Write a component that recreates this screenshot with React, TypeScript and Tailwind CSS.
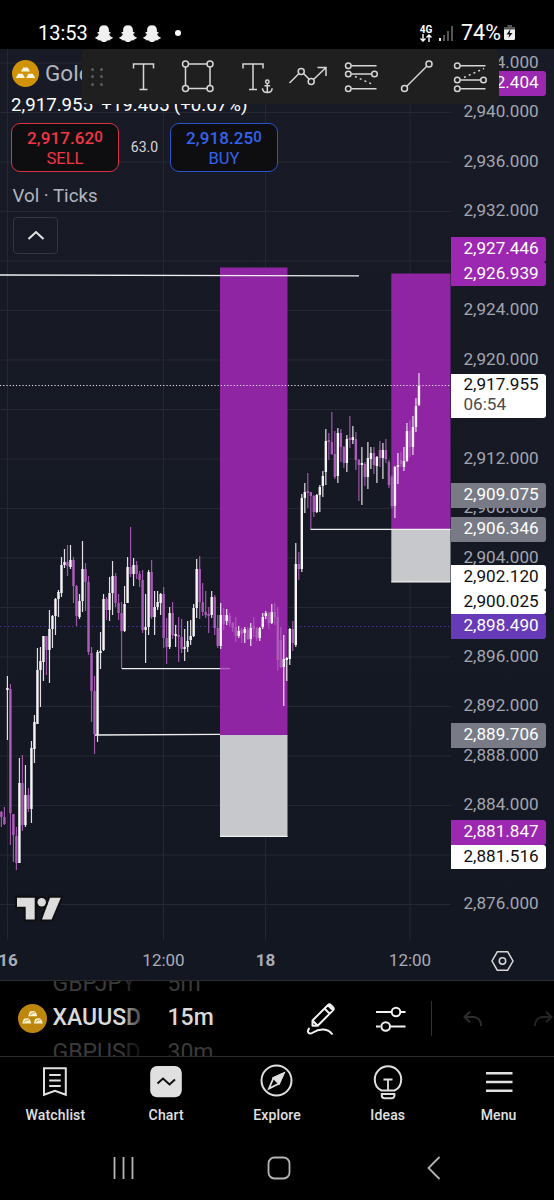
import React from "react";

type Candle = [number, number, number, number, number];

// up (1) or down (0), high, body top, body bottom, low
const candles: Candle[] = [
  [0, 811, 812, 817, 827], [0, 807, 817, 824, 825], [1, 676, 688, 690, 740],
  [0, 684, 689, 813, 845], [0, 814, 814, 835, 862], [0, 827, 836, 863, 870],
  [1, 758, 783, 863, 863], [0, 755, 783, 825, 831], [1, 765, 795, 825, 827],
  [0, 788, 795, 809, 812], [1, 741, 748, 809, 823], [1, 715, 722, 749, 763],
  [1, 648, 670, 724, 724], [1, 647, 661, 670, 707], [1, 636, 636, 662, 681],
  [0, 636, 636, 650, 675], [1, 610, 629, 650, 683], [1, 615, 616, 629, 648],
  [1, 598, 599, 616, 635], [1, 590, 592, 599, 617], [1, 557, 565, 593, 597],
  [1, 549, 562, 565, 568], [0, 545, 562, 566, 576], [1, 545, 560, 567, 569],
  [0, 557, 560, 586, 603], [0, 585, 586, 616, 626], [1, 594, 601, 617, 619],
  [1, 541, 569, 601, 612], [0, 563, 569, 582, 611], [0, 576, 582, 652, 655],
  [0, 647, 653, 691, 722], [0, 676, 691, 734, 754], [1, 650, 652, 735, 742],
  [1, 632, 651, 653, 669], [1, 594, 599, 650, 651], [0, 597, 599, 610, 620],
  [1, 577, 593, 610, 621], [1, 561, 576, 593, 615], [0, 573, 576, 603, 607],
  [0, 594, 603, 613, 620], [0, 602, 613, 631, 669], [1, 586, 604, 631, 632],
  [1, 557, 567, 603, 603], [0, 527, 567, 574, 577], [1, 558, 565, 574, 586],
  [0, 561, 565, 574, 579], [0, 571, 574, 580, 587], [0, 570, 580, 630, 633],
  [1, 594, 627, 630, 663], [1, 570, 572, 627, 635], [0, 560, 572, 617, 619],
  [1, 591, 607, 617, 635], [1, 591, 602, 607, 610], [1, 593, 594, 603, 615],
  [0, 587, 594, 638, 648], [0, 618, 638, 647, 664], [1, 607, 613, 647, 649],
  [0, 602, 613, 635, 639], [1, 625, 634, 636, 647], [0, 617, 635, 637, 662],
  [0, 619, 637, 649, 653], [1, 629, 647, 649, 661], [1, 621, 641, 647, 652],
  [1, 620, 636, 640, 645], [1, 604, 608, 636, 637], [1, 559, 569, 608, 618],
  [0, 556, 569, 602, 619], [0, 583, 602, 612, 616], [0, 591, 612, 615, 618],
  [0, 607, 614, 616, 633], [1, 591, 597, 615, 618], [0, 595, 597, 628, 635],
  [0, 615, 628, 646, 648], [1, 603, 615, 646, 649], [0, 608, 615, 624, 630],
  [1, 609, 615, 621, 625], [0, 613, 616, 623, 627], [0, 622, 623, 628, 632],
  [0, 617, 627, 636, 642], [1, 626, 631, 636, 638], [0, 628, 630, 634, 643],
  [1, 627, 629, 633, 643], [0, 627, 630, 639, 640], [1, 623, 628, 639, 646],
  [0, 617, 626, 629, 637], [0, 627, 629, 638, 641], [1, 627, 628, 638, 641],
  [1, 613, 617, 627, 629], [1, 611, 613, 616, 619], [0, 612, 613, 623, 629],
  [1, 604, 612, 623, 624], [0, 603, 612, 617, 625], [0, 607, 617, 660, 671],
  [0, 627, 640, 667, 668], [1, 635, 659, 667, 706], [1, 657, 658, 660, 681],
  [1, 628, 629, 659, 665], [0, 621, 629, 643, 651], [1, 543, 564, 645, 647],
  [0, 552, 564, 569, 580], [1, 494, 498, 569, 572], [1, 483, 492, 498, 513],
  [0, 473, 491, 493, 508], [0, 492, 492, 496, 529], [0, 495, 496, 512, 517],
  [1, 494, 495, 512, 513], [1, 485, 487, 495, 512], [1, 471, 476, 486, 497],
  [1, 429, 441, 472, 485], [0, 433, 440, 442, 460], [0, 412, 442, 454, 455],
  [0, 431, 454, 477, 479], [1, 428, 433, 476, 483], [0, 429, 433, 447, 462],
  [0, 446, 447, 463, 468], [1, 435, 439, 463, 472], [0, 416, 438, 440, 448],
  [1, 426, 437, 440, 444], [0, 432, 439, 460, 470], [0, 459, 460, 465, 501],
  [1, 447, 463, 465, 505], [0, 462, 464, 477, 486], [1, 442, 458, 477, 489],
  [1, 447, 453, 459, 469], [0, 447, 453, 465, 474], [1, 456, 457, 466, 483],
  [0, 441, 450, 458, 467], [1, 443, 450, 458, 479], [0, 439, 450, 459, 463],
  [0, 460, 462, 485, 488], [0, 475, 477, 506, 508], [1, 466, 467, 506, 518],
  [1, 453, 465, 467, 484], [0, 452, 460, 464, 467], [1, 447, 461, 467, 471],
  [1, 423, 431, 461, 462], [0, 420, 431, 447, 457], [1, 416, 427, 447, 455],
  [1, 398, 406, 427, 432], [1, 373, 386, 405, 406],
];

const ticks = Array.from({ length: 18 }, (_, i) => 2944 - i * 4);
// ticks fully covered by a price tag get no label
const coveredTicks = [2928, 2916, 2900, 2880];
const gridX = [7.5, 163.5, 265.5, 410];

const tags = [
  { text: "2,942.404", className: "top-[22px] bg-[#9c27b0] text-white" },
  { text: "2,927.446", className: "top-[188px] bg-[#9c27b0] text-white" },
  { text: "2,926.939", className: "top-[212.500px] bg-[#9c27b0] text-white" },
  { text: "2,909.075", className: "top-[434px] bg-[#787b86] text-white" },
  { text: "2,906.346", className: "top-[468px] bg-[#787b86] text-white" },
  { text: "2,902.120", className: "top-[516px] bg-white text-[#0f0f0f]" },
  { text: "2,900.025", className: "top-[540.500px] bg-white text-[#0f0f0f]" },
  { text: "2,898.490", className: "top-[565px] bg-[#673ab7] text-white" },
  { text: "2,889.706", className: "top-[674px] bg-[#787b86] text-white" },
  { text: "2,881.847", className: "top-[771px] bg-[#9c27b0] text-white" },
  { text: "2,881.516", className: "top-[795.500px] bg-white text-[#0f0f0f]" },
];

const Ghost = () => (
  <svg width="18" height="18" viewBox="0 0 18 18" fill="#f0f0f0">
    <path d="M9 .3c3.100 0 4.900 2 4.900 4.700v2c.8 0 1.600.1 1.700.6.1.6-.9 1-1.500 1.400.6 1.800 1.900 2.900 3.700 3.500.3.800-1 1.400-2.200 1.600-.2.500-.1 1-.6 1.100-.8.100-1.700-.1-2.500.3-.9.600-1.700 1.600-3.500 1.600s-2.600-1-3.500-1.600c-.8-.4-1.700-.2-2.500-.3-.5-.1-.4-.6-.6-1.100C1.200 13.900-.1 13.300.2 12.500 2 11.900 3.300 10.800 3.900 9c-.6-.4-1.600-.8-1.500-1.400.1-.5.900-.6 1.700-.6V5C4.100 2.300 5.900.3 9 .3z" />
  </svg>
);

const StatusBar = () => (
  <div className="flex h-[49px] items-end bg-black pb-[5.500px] pl-[38px] text-white">
    <span className="w-[57px] text-[20px] leading-[22px]">13:53</span>
    <div className="flex w-[74px] gap-[6px] pb-[1px]">
      <Ghost />
      <Ghost />
      <Ghost />
    </div>
    <span className="mb-[8px] ml-[5.500px] size-[6px] rounded-full bg-white" />
    <div className="ml-[238.500px] flex w-[14px] flex-col items-center pb-[2px]">
      <span className="text-[10px] font-bold leading-[9px]">4G</span>
      <svg width="12" height="8" viewBox="0 0 12 8" fill="none" stroke="white" strokeWidth="1.400">
        <path d="M3 0v7M.5 4.500 3 7l2.500-2.500M9 8V1M6.500 3.500 9 1l2.500 2.500" />
      </svg>
    </div>
    <svg className="mb-[3px] ml-[6px]" width="15" height="15" viewBox="0 0 15 15">
      <path d="M0 12h2v3H0z" fill="#eee" />
      <path d="M4 9h2v6H4zM8 5h2v10H8zM12 0h2v15h-2z" fill="#555" />
    </svg>
    <span className="ml-[7px] w-[43px] text-[21.500px] leading-[22px]">74%</span>
    <svg className="mb-[2.500px]" width="12" height="17" viewBox="0 0 12 17">
      <path d="M3.500 1h4.500v2h3v5H0V3h3.500z" fill="#555" />
      <path d="M0 5.500h11v9a1.500 1.500 0 0 1-1.500 1.500h-8A1.500 1.500 0 0 1 0 14.500z" fill="#f0f0f0" />
      <path d="M6.500 5 2.500 10.500h2.700L4.500 14l4-5H5.800z" fill="#111" />
    </svg>
  </div>
);

const ToolIcon = ({ children }: { children: React.ReactNode }) => (
  <svg
    className="shrink-0"
    width="54.500"
    height="54"
    viewBox="0 0 54.500 54"
    fill="none"
    stroke="#d6d6d6"
    strokeWidth="1.500"
  >
    {children}
  </svg>
);

const Toolbar = () => (
  <div className="absolute left-[82px] top-0 flex h-[55px] w-[417px] items-center rounded-md bg-[#1f1f1f]">
    <div className="grid w-[34px] shrink-0 grid-cols-[3px_3px] justify-center gap-x-[6px] gap-y-[4.500px] pr-[3.500px]">
      {[0, 1, 2, 3, 4, 5].map((i) => (
        <span key={i} className="size-[3px] rounded-full bg-[#5d5d5d]" />
      ))}
    </div>
    <ToolIcon>
      <path d="M17.500 18.500V14h20v4.500M27.500 14v25.500M23.500 39.500h8" />
    </ToolIcon>
    <ToolIcon>
      <path d="M17.500 14h18.500M17.500 38.500h18.500M14.500 17v18.500M39 17v18.500" />
      <circle cx="14.500" cy="14" r="3" />
      <circle cx="39" cy="14" r="3" />
      <circle cx="14.500" cy="38.500" r="3" />
      <circle cx="39" cy="38.500" r="3" />
    </ToolIcon>
    <ToolIcon>
      <path d="M18 18.500V14h20v4.500M28 14v25.500M24 39.500h8" />
      <circle cx="42.300" cy="31.800" r="1.700" />
      <path d="M42.300 33.500v9M39.500 35.700h5.600M37.500 38.200c0 3 2 4.300 4.800 4.300s4.800-1.300 4.800-4.300" />
    </ToolIcon>
    <ToolIcon>
      <path d="m9.500 33 9.500-9.500M23.500 23.500l6 6M33.500 29.500 46 17.500M37.500 17.500H46V26" />
      <circle cx="21.200" cy="21.500" r="3" />
      <circle cx="31.200" cy="31.500" r="3" />
    </ToolIcon>
    <ToolIcon>
      <path d="M17.500 15.700h25M17.500 24h20M17.500 38.700h25" />
      <path d="m21 26.500 19 8.500" strokeDasharray="2 3.200" />
      <circle cx="14.300" cy="15.700" r="2.800" />
      <circle cx="14.300" cy="24" r="2.800" />
      <circle cx="40.500" cy="24" r="2.800" />
      <circle cx="14.300" cy="38.700" r="2.800" />
    </ToolIcon>
    <ToolIcon>
      <path d="m17.500 36.500 20.500-20.500" />
      <circle cx="15.500" cy="38.500" r="3" />
      <circle cx="40" cy="14" r="3" />
    </ToolIcon>
    <ToolIcon>
      <path d="M17.500 15.700h25M17.500 30h20M17.500 38.700h25" />
      <path d="m21 27.500 20-9" strokeDasharray="2 3.200" />
      <circle cx="14.300" cy="15.700" r="2.800" />
      <circle cx="14.300" cy="30" r="2.800" />
      <circle cx="40.500" cy="30" r="2.800" />
      <circle cx="14.300" cy="38.700" r="2.800" />
    </ToolIcon>
  </div>
);

const GoldIcon = ({ size }: { size: number }) => (
  <svg className="shrink-0" width={size} height={size} viewBox="0 0 27 27">
    <circle cx="13.500" cy="13.500" r="13.500" fill="#d09307" />
    <path
      d="M11.200 7.500h4.600l2.200 4H9zM6.200 13.800h4.400l2.300 4.200H3.800zM16.400 13.800h4.400l2.400 4.200h-9.100z"
      fill="#fff7e0"
    />
  </svg>
);

const ChartCanvas = () => (
  <svg className="absolute left-0 top-0" width="451" height="891" viewBox="0 49 451 891">
    {ticks.map((t) => (
      <path key={t} d={`M0 ${112.5 + (2940 - t) * 12.375}h451`} stroke="#242833" />
    ))}
    {gridX.map((x) => (
      <path key={x} d={`M${x} 49v891`} stroke="#242833" />
    ))}
    <path d="M0 626.500h451" stroke="#4a3399" strokeDasharray="1.500 2.500" />
    <rect x="220" y="267.500" width="67.500" height="467.500" fill="#9025a3" />
    <rect x="220" y="735" width="67.500" height="101.500" fill="#c7c8cb" />
    <rect x="391.300" y="273.500" width="59.200" height="255.500" fill="#9025a3" />
    <rect x="391.300" y="529" width="59.200" height="53" fill="#c7c8cb" />
    {candles.map(([up, high, top, bottom, low], i) => {
      const x = 1.4 + i * 3.004;
      const color = up ? "#f7f5f8" : "#ad5cba";
      return (
        <g key={i} fill={color}>
          <rect x={x - 0.6} y={high} width="1.200" height={low - high} opacity="0.9" />
          <rect x={x - 1.2} y={top} width="2.400" height={Math.max(bottom - top, 1)} />
        </g>
      );
    })}
    <g stroke="#f0f0f0" strokeWidth="1.300" fill="none">
      <path d="M0 275 359 275.800" />
      <path d="M95 735 220 734.300" />
      <path d="M122 668.600h98" />
      <path d="M220 668.600h10" opacity="0.350" />
      <path d="M310.500 529.300h140" />
      <path d="M220 836.300h67.500M391.300 581.800h59" />
    </g>
    <path d="M0 385.500h451" stroke="#e6e6e6" strokeDasharray="1.200 2" />
    <g fill="#dcdcdc" stroke="#0f0f0f" strokeWidth="4" paintOrder="stroke" strokeLinejoin="round">
      <path d="M17 897.700h17.700v21.700h-9v-12.700H17z" />
      <path d="M50 897.700h10.800l-9.200 21.700H42z" />
      <circle cx="41.700" cy="902.200" r="4.200" />
    </g>
  </svg>
);

const Quote = () => (
  <div className="absolute left-0 top-0 flex w-[280px] flex-col text-white">
    <div className="flex h-[27px] items-center gap-[6px] pl-[12px] pt-[22px]">
      <GoldIcon size={27} />
      <span className="text-[22.500px] text-[#b2b5be]">Gold</span>
    </div>
    <div className="mt-[15px] flex h-[28px] items-center gap-[8px] whitespace-nowrap pl-[11px] text-[18.700px]">
      <span>2,917.955</span>
      <span>+19.465 (+0.67%)</span>
    </div>
    <div className="mt-[3.500px] flex h-[49px] items-center pl-[11px]">
      <button className="flex h-[49px] w-[108px] flex-col items-center rounded-[9px] border border-[#d63345] bg-[#0e0e10] pt-[4px] text-[#f23645]">
        <span className="flex text-[17px] font-medium leading-[20px] tracking-[0.1px]">
          2,917.62<span className="text-[15px] leading-[18px]">0</span>
        </span>
        <span className="text-[16.500px] leading-[21px]">SELL</span>
      </button>
      <span className="w-[51px] text-center text-[14px] text-[#d6d7db]">63.0</span>
      <button className="flex h-[49px] w-[108px] flex-col items-center rounded-[9px] border border-[#2a55c8] bg-[#0e0e10] pt-[4px] text-[#3563f0]">
        <span className="flex text-[17px] font-medium leading-[20px] tracking-[0.1px]">
          2,918.25<span className="text-[15px] leading-[18px]">0</span>
        </span>
        <span className="text-[16.500px] leading-[21px]">BUY</span>
      </button>
    </div>
    <span className="mt-[11.500px] pl-[12.500px] text-[18.700px] leading-[26px] text-[#b2b5be]">
      Vol · Ticks
    </span>
    <button className="ml-[13px] mt-[8px] flex h-[37px] w-[45px] items-center justify-center rounded-[4px] border border-[#34363d]">
      <svg width="18" height="11" viewBox="0 0 18 11" fill="none" stroke="#e6e6e6" strokeWidth="2">
        <path d="m1.500 9 7.500-7 7.500 7" />
      </svg>
    </button>
  </div>
);

const PriceScale = () => (
  <div className="absolute left-[451px] top-0 h-[891px] w-[103px] overflow-hidden text-[17.100px] text-[#a3a6af]">
    <div className="-mt-[11.500px] flex flex-col pl-[12.500px]">
      {ticks.map((t) => (
        <span key={t} className="h-[49.500px] leading-[49.500px]">
          {coveredTicks.includes(t) ? "" : `${t.toLocaleString("en-US")}.000`}
        </span>
      ))}
    </div>
    {tags.map(({ text, className }) => (
      <span
        key={text}
        className={`absolute left-0 h-[24.500px] w-[95px] rounded-r-[3px] pl-[12.500px] leading-[22.500px] ${className}`}
      >
        {text}
      </span>
    ))}
    <div className="absolute left-0 top-[324.500px] flex h-[44.500px] w-[95px] flex-col rounded-r-[3px] bg-white pl-[12.500px] leading-[20px] text-[#0f0f0f]">
      <span>2,917.955</span>
      <span className="text-[#4a4a4a]">06:54</span>
    </div>
  </div>
);

const TimeScale = () => (
  <div className="flex h-[40px] items-center whitespace-nowrap pt-px text-center text-[17px] text-[#a9acb6]">
    <span className="flex w-[16px] justify-center font-bold">16</span>
    <span className="ml-[97px] w-[101px]">12:00</span>
    <span className="w-[103px] font-bold">18</span>
    <span className="ml-[13px] w-[160px]">12:00</span>
    <svg className="ml-[1px]" width="23" height="22" viewBox="0 0 23 22" fill="none" stroke="#d8d8d8" strokeWidth="1.500">
      <path d="M6.300 1.800h10.400L22 11l-5.300 9.200H6.300L1 11z" />
      <circle cx="11.500" cy="11" r="3.200" />
    </svg>
  </div>
);

const Picker = () => (
  <div className="flex h-[77px] items-center border-y border-[#2c2c2c] bg-black pl-[17.500px]">
    <svg className="shrink-0" width="29" height="29" viewBox="0 0 29 29">
      <circle cx="14.500" cy="14.500" r="14.500" fill="#bd860c" />
      <path
        d="m10.200 12.300 1.300-4c.2-.6.600-.9 1.200-1l3-.3c.5 0 .9.100 1.200.5l1.500 1.700.8 3.100zM4.200 19.500l1.300-4c.2-.6.600-.9 1.200-1l3-.3c.5 0 .9.100 1.200.5l1.500 1.700.8 3.100zM15.700 19.500l1.300-4c.2-.6.600-.9 1.200-1l3-.3c.5 0 .9.100 1.200.5l1.500 1.700.8 3.100z"
        fill="#fff3cf"
      />
      <path
        d="m12.300 11.200 1.300-2 3.400-.5M6.300 18.400l1.300-2 3.400-.5M17.800 18.400l1.300-2 3.400-.5"
        fill="none"
        stroke="#c99a2c"
        strokeWidth="0.900"
      />
    </svg>
    <div className="relative ml-[6px] flex h-full w-[97px] flex-col justify-center overflow-hidden text-[23px] leading-[34.500px] text-[#3b3b3b]">
      <span>GBPJPY</span>
      <span className="font-medium text-[#dadada]">XAUUSD</span>
      <span>GBPUSD</span>
      <span className="absolute inset-y-0 left-[74px] w-[22px] bg-gradient-to-r from-black/30 to-black/90" />
    </div>
    <div className="ml-[18px] flex h-full w-[60px] flex-col justify-center overflow-hidden text-[23px] leading-[34.500px] text-[#3b3b3b]">
      <span>5m</span>
      <span className="font-medium text-[#dadada]">15m</span>
      <span>30m</span>
    </div>
    <svg className="ml-[78.500px] shrink-0" width="32" height="34" viewBox="0 0 32 34" fill="none" stroke="#f2f2f2" strokeWidth="2" strokeLinejoin="round">
      <path d="M6.500 18.500 21.800 3.200a2.300 2.300 0 0 1 3.200 0l2 2a2.300 2.300 0 0 1 0 3.200L11.700 23.700H6.500zM18.500 6.500l5.200 5.200M22 3.200l5 5M6.500 18.500l5.200 5.200" />
      <path d="M3.500 26c-3.500 4-.5 7 3.500 4.500 7-4.500 15-4 19.500 2" />
    </svg>
    <svg className="ml-[38px] shrink-0" width="30" height="26" viewBox="0 0 30 26" fill="none" stroke="#f2f2f2" strokeWidth="2">
      <path d="M0 6h15M25 6h4.500M0 20.500h4.500M14.500 20.500h15" />
      <circle cx="20" cy="6" r="4.300" />
      <circle cx="9.700" cy="20.500" r="4.300" />
    </svg>
    <span className="ml-[25px] h-[35px] w-px shrink-0 bg-[#333]" />
    <svg className="ml-[31px] shrink-0" width="20" height="16" viewBox="0 0 20 16" fill="none" stroke="#2e2e2e" strokeWidth="2">
      <path d="M7 .8 1.500 6 7 11.200M1.500 6h8.500c5 0 8 3.500 8 9" />
    </svg>
    <svg className="ml-[50px] shrink-0" width="20" height="16" viewBox="0 0 20 16" fill="none" stroke="#242424" strokeWidth="2">
      <path d="M13 .8 18.500 6 13 11.200M18.500 6H10c-5 0-8 3.500-8 9" />
    </svg>
  </div>
);

const tabs = [
  {
    label: "Watchlist",
    icon: (
      <>
        <path d="M7 4.200h21.800v26.600L17.900 26.700 7 30.800z" />
        <path d="M12.200 11h11.500M12.200 16.500h11.500M12.200 22h11.500" />
      </>
    ),
  },
  {
    label: "Chart",
    icon: (
      <>
        <rect x="2.200" y="2" width="31.600" height="31.300" rx="7" fill="#e0e0e0" stroke="none" />
        <path d="m9.500 19.500 5.500-5 6.500 6 5.500-5" stroke="#0f0f0f" />
      </>
    ),
  },
  {
    label: "Explore",
    icon: (
      <>
        <circle cx="17.500" cy="16.500" r="15" />
        <path d="m24.500 9.500-10 4.500-4.500 10.500 10-5z" strokeWidth="1.800" />
        <path d="m24.500 9.500-10 4.500 5.500 5.500z" fill="#e0e0e0" />
      </>
    ),
  },
  {
    label: "Ideas",
    icon: (
      <>
        <path d="M11.500 26.500C7 24.500 4.800 20.500 4.800 15.500a13.200 13.200 0 0 1 26.400 0c0 5-2.200 9-6.700 11" />
        <path d="M11 26.500h14M13.500 15.500h9M18 15.500v11" strokeWidth="1.800" />
        <path d="M11.800 30h12.600v1.500a2.800 2.800 0 0 1-2.800 2.800h-7a2.800 2.800 0 0 1-2.800-2.800z" />
      </>
    ),
  },
  { label: "Menu", icon: <path d="M5 9.200h26.500M5 18h26.500M5 26.700h26.500" strokeWidth="2.400" /> },
];

const TabBar = () => (
  <div className="grid h-[78px] grid-cols-5 bg-black pt-[7px] text-[#e0e0e0]">
    {tabs.map((tab) => (
      <div key={tab.label} className="flex flex-col items-center">
        <svg width="36" height="36" viewBox="0 0 36 36" fill="none" stroke="#e0e0e0" strokeWidth="2">
          {tab.icon}
        </svg>
        <span className="mt-[5px] text-[14px] font-medium leading-[20px] tracking-[0.150px]">
          {tab.label}
        </span>
      </div>
    ))}
  </div>
);

const SystemNav = () => (
  <div className="flex flex-1 items-start bg-black pl-[112px] pt-[20.500px]">
    <svg width="23" height="24" viewBox="0 0 23 24" fill="none" stroke="#b5b5b5" strokeWidth="1.800">
      <path d="M2.500 1v22M11.500 1v22M20.500 1v22" />
    </svg>
    <svg className="ml-[131.500px]" width="24" height="24" viewBox="0 0 24 24" fill="none" stroke="#b5b5b5" strokeWidth="1.800">
      <rect x="1.500" y="1.500" width="21" height="21" rx="6" />
    </svg>
    <svg className="ml-[136.500px]" width="14" height="24" viewBox="0 0 14 24" fill="none" stroke="#b5b5b5" strokeWidth="1.800">
      <path d="M12.500 1 1.500 12l11 11" />
    </svg>
  </div>
);

export default function App() {
  return (
    <div className="flex h-[1200px] w-[554px] flex-col overflow-hidden bg-black font-['Roboto',sans-serif]">
      <StatusBar />
      <div className="relative h-[931px] shrink-0 overflow-hidden bg-gradient-to-b from-[#181b26] to-[#131722]">
        <div className="relative h-[891px]">
          <ChartCanvas />
          <Quote />
          <PriceScale />
          <Toolbar />
        </div>
        <TimeScale />
      </div>
      <Picker />
      <TabBar />
      <SystemNav />
    </div>
  );
}
